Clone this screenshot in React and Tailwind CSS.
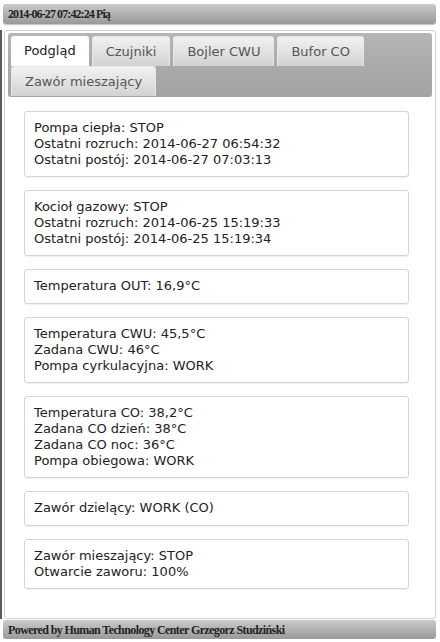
const tabs = ['Podgląd', 'Czujniki', 'Bojler CWU', 'Bufor CO'];

const cards = [
  ['Pompa ciepła: STOP', 'Ostatni rozruch: 2014-06-27 06:54:32', 'Ostatni postój: 2014-06-27 07:03:13'],
  ['Kocioł gazowy: STOP', 'Ostatni rozruch: 2014-06-25 15:19:33', 'Ostatni postój: 2014-06-25 15:19:34'],
  ['Temperatura OUT: 16,9°C'],
  ['Temperatura CWU: 45,5°C', 'Zadana CWU: 46°C', 'Pompa cyrkulacyjna: WORK'],
  ['Temperatura CO: 38,2°C', 'Zadana CO dzień: 38°C', 'Zadana CO noc: 36°C', 'Pompa obiegowa: WORK'],
  ['Zawór dzielący: WORK (CO)'],
  ['Zawór mieszający: STOP', 'Otwarcie zaworu: 100%'],
];

const Tab = ({ label, active }) => (
  <div
    className={
      active
        ? 'h-[30px] px-[13px] flex items-center bg-white text-[#222] rounded-t-[3px]'
        : 'h-[30px] px-[13px] flex items-center bg-gradient-to-b from-[#f2f2f2] via-[#e2e2e2] to-[#d2d2d2] text-[#555] border-t border-x border-[#e6e6e6] rounded-t-[3px]'
    }
  >
    {label}
  </div>
);

const App = () => {
  return (
    <div className="w-[440px] h-[642px] bg-white overflow-hidden pt-[4px] font-['DejaVu_Sans',Verdana,sans-serif] text-[13px] leading-[16px]">
      {/* top bar */}
      <div className="ml-[3px] w-[433px] h-[20px] rounded-[3px] bg-gradient-to-b from-[#cacaca] via-[#b2b2b2] to-[#999] flex items-center pl-[5px] font-['Liberation_Serif',serif] font-bold text-[12px] tracking-[-0.9px] text-[#222] shadow-[0_1px_1px_rgba(0,0,0,0.25)]">
        2014-06-27 07:42:24 Pią
      </div>

      <div className="flex mt-[6px]">
        <div className="w-[2px] bg-[#5c5c5c]" />
        {/* main panel */}
        <div className="ml-[2px] w-[432px] h-[589px] border border-[#cfcfcf] rounded-[3px] px-[3px] pt-[2px]">
          {/* tabs */}
          <div className="h-[64px] rounded-[3px] bg-gradient-to-b from-[#b6b6b6] via-[#aaaaaa] to-[#a4a4a4] pt-[3px] pl-[3px] flex flex-wrap content-start gap-x-[3px]">
            {tabs.map((t, i) => (
              <Tab key={t} label={t} active={i === 0} />
            ))}
            <Tab label="Zawór mieszający" />
          </div>

          {/* cards */}
          <div className="mt-[14px] ml-[16px] w-[385px] flex flex-col gap-[13px] text-[#222]">
            {cards.map((lines, i) => (
              <div
                key={i}
                className={`border border-[#d4d4d4] rounded-[3px] px-[9px] pt-[8px] shadow-[0_1px_1px_rgba(0,0,0,0.06)] ${lines.length === 1 ? 'pb-[9px]' : 'pb-[8px]'}`}
              >
                {lines.map((l) => (
                  <div key={l}>{l}</div>
                ))}
              </div>
            ))}
          </div>
        </div>
      </div>

      {/* footer */}
      <div className="ml-[3px] mt-[1px] w-[433px] h-[19px] rounded-[3px] bg-gradient-to-b from-[#cacaca] via-[#b2b2b2] to-[#999] flex items-center pl-[5px] font-['Liberation_Serif',serif] font-bold text-[12px] tracking-[-0.6px] text-[#222]">
        Powered by Human Technology Center Grzegorz Studziński
      </div>
    </div>
  );
};

export default App;
